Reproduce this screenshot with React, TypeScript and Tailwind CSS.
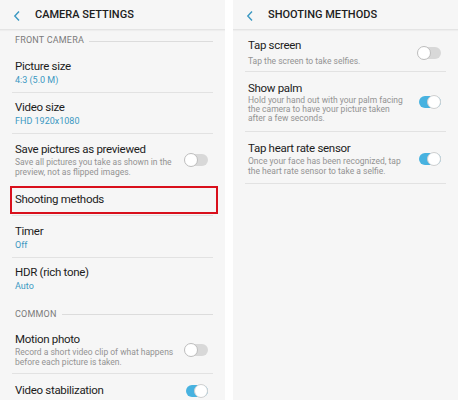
import React from "react";

const font = { fontFamily: "Roboto, 'Liberation Sans', sans-serif" };

function Chevron() {
  return (
    <svg width="8" height="12" viewBox="0 0 8 12" className="shrink-0">
      <polyline points="6,1.5 1.8,6 6,10.5" fill="none" stroke="#3a98c2" strokeWidth="1.4" />
    </svg>
  );
}

function Header({ title }: { title: string }) {
  return (
    <div className="h-[30px] flex items-center pl-[13px] pt-[2px] border-b border-[#e4e4e4] shadow-[0_1px_1px_rgba(0,0,0,0.03)]">
      <Chevron />
      <span className="ml-[14px] text-[11px] font-medium text-[#202020]">{title}</span>
    </div>
  );
}

function Toggle({ on }: { on?: boolean }) {
  return (
    <div className="relative w-[24px] h-[14px] shrink-0 mr-[5px]">
      <div className={`absolute top-[1px] bottom-[1px] left-[2px] right-0 rounded-full ${on ? "bg-[#47b2e0]" : "bg-[#d8d8d8]"}`} />
      <div
        className={`absolute top-0 w-[14px] h-[14px] rounded-full bg-white border ${on ? "right-0 border-[#d0d0d0]" : "left-0 border-[#bdbdbd]"}`}
      />
    </div>
  );
}

function Section({ label, top }: { label: string; top: string }) {
  return (
    <div className={`flex items-center pl-[15px] pr-[12px] gap-[5px] ${top}`}>
      <span className="text-[9px] text-[#7b7b7b] tracking-[0.2px] uppercase">{label}</span>
      <div className="flex-1 h-px bg-[#dcdcdc]" />
    </div>
  );
}

function Item({
  title,
  value,
  sub,
  toggle,
  pad = "pt-[7px] pb-[6px]",
  subLead = "leading-[10px]",
  divider = true,
}: {
  title: string;
  value?: string;
  sub?: string[];
  toggle?: "on" | "off";
  pad?: string;
  subLead?: string;
  divider?: boolean;
}) {
  return (
    <div className="px-[12px]">
      <div className={`flex items-center pl-[3px] ${pad} ${divider ? "border-b border-[#e2e2e2]" : ""}`}>
        <div className="flex-1 min-w-0">
          <div className="text-[11.5px] leading-[15px] text-[#1c1c1c] tracking-[-0.3px]">{title}</div>
          {value && <div className="text-[9px] leading-[12px] text-[#3a98c2]">{value}</div>}
          {sub &&
            sub.map((s) => (
              <div key={s} className={`text-[8.5px] ${subLead} text-[#939393] whitespace-nowrap`}>
                {s}
              </div>
            ))}
        </div>
        {toggle && <Toggle on={toggle === "on"} />}
      </div>
    </div>
  );
}

export default function App() {
  return (
    <div className="w-[458px] h-[400px] bg-white flex gap-[8px] overflow-hidden" style={font}>
      <div className="w-[225px] h-full bg-[#f6f6f6] overflow-hidden">
        <Header title="CAMERA SETTINGS" />
        <Section label="Front camera" top="h-[22px]" />
        <Item title="Picture size" value="4:3 (5.0 M)" />
        <Item title="Video size" value="FHD 1920x1080" />
        <Item
          title="Save pictures as previewed"
          sub={["Save all pictures you take as shown in the", "preview, not as flipped images."]}
          toggle="off"
          pad="pt-[8px] pb-[8px]"
          divider={false}
        />
        <div className="px-[12px]">
          <div className="pt-[1px] pb-[1px] border-b border-[#e2e2e2]">
            <div className="h-[28px] -ml-[2px] -mr-[5px] border-2 border-[#d9101c] flex items-center pl-[3px]">
              <span className="text-[11.5px] text-[#1c1c1c] tracking-[-0.3px]">Shooting methods</span>
            </div>
          </div>
        </div>
        <Item title="Timer" value="Off" pad="pt-[8px] pb-[6px]" />
        <Item title="HDR (rich tone)" value="Auto" divider={false} />
        <Section label="Common" top="h-[27px] pt-[6px]" />
        <Item
          title="Motion photo"
          sub={["Record a short video clip of what happens", "before each picture is taken."]}
          toggle="off"
        />
        <Item title="Video stabilization" toggle="on" pad="pt-[9px] pb-[8px]" divider={false} />
      </div>
      <div className="w-[225px] h-full bg-[#f6f6f6] overflow-hidden">
        <Header title="SHOOTING METHODS" />
        <Item
          title="Tap screen"
          sub={["Tap the screen to take selfies."]}
          toggle="off"
          pad="pt-[8px] pb-[4px]"
          subLead="leading-[12px] mt-[2px]"
        />
        <Item
          title="Show palm"
          sub={[
            "Hold your hand out with your palm facing",
            "the camera to have your picture taken",
            "after a few seconds.",
          ]}
          toggle="on"
          pad="pt-[9px] pb-[8px]"
          subLead="leading-[9px]"
        />
        <Item
          title="Tap heart rate sensor"
          sub={["Once your face has been recognized, tap", "the heart rate sensor to take a selfie."]}
          toggle="on"
          pad="pt-[9px] pb-[7px]"
          subLead="leading-[10px]"
        />
      </div>
    </div>
  );
}
